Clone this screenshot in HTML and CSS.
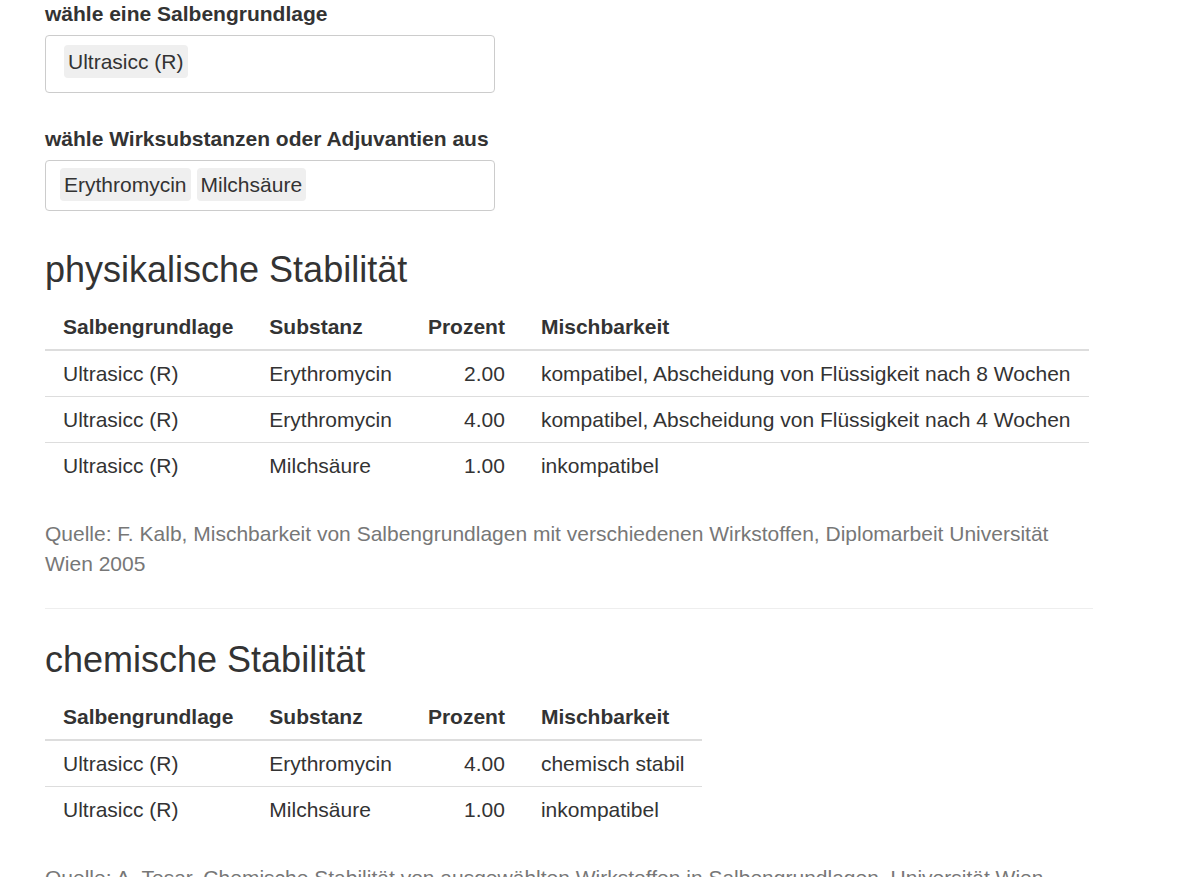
FILE: index.html
```html
<!DOCTYPE html>
<html lang="de">
<head>
<meta charset="utf-8">
<title>Salbengrundlagen</title>
<link rel="stylesheet" href="styles.css">
</head>
<body>
<div class="container">
  <div class="field">
    <label class="field-label">wähle eine Salbengrundlage</label>
    <div class="select select-single">
      <span class="tag">Ultrasicc (R)</span>
    </div>
  </div>
  <div class="field">
    <label class="field-label">wähle Wirksubstanzen oder Adjuvantien aus</label>
    <div class="select select-multi">
      <span class="tag">Erythromycin</span>
      <span class="tag">Milchsäure</span>
    </div>
  </div>

  <h2 class="section-title">physikalische Stabilität</h2>
  <table class="data-table">
    <thead>
      <tr><th>Salbengrundlage</th><th>Substanz</th><th class="num">Prozent</th><th>Mischbarkeit</th></tr>
    </thead>
    <tbody>
      <tr><td>Ultrasicc (R)</td><td>Erythromycin</td><td class="num">2.00</td><td>kompatibel, Abscheidung von Flüssigkeit nach 8 Wochen</td></tr>
      <tr><td>Ultrasicc (R)</td><td>Erythromycin</td><td class="num">4.00</td><td>kompatibel, Abscheidung von Flüssigkeit nach 4 Wochen</td></tr>
      <tr><td>Ultrasicc (R)</td><td>Milchsäure</td><td class="num">1.00</td><td>inkompatibel</td></tr>
    </tbody>
  </table>
  <p class="source">Quelle: F. Kalb, Mischbarkeit von Salbengrundlagen mit verschiedenen Wirkstoffen, Diplomarbeit Universität Wien 2005</p>
  <hr class="divider">

  <h2 class="section-title">chemische Stabilität</h2>
  <table class="data-table">
    <thead>
      <tr><th>Salbengrundlage</th><th>Substanz</th><th class="num">Prozent</th><th>Mischbarkeit</th></tr>
    </thead>
    <tbody>
      <tr><td>Ultrasicc (R)</td><td>Erythromycin</td><td class="num">4.00</td><td>chemisch stabil</td></tr>
      <tr><td>Ultrasicc (R)</td><td>Milchsäure</td><td class="num">1.00</td><td>inkompatibel</td></tr>
    </tbody>
  </table>
  <p class="source">Quelle: A. Tesar, Chemische Stabilität von ausgewählten Wirkstoffen in Salbengrundlagen, Universität Wien 2007</p>
</div>
</body>
</html>
```

FILE: styles.css
```css
html, body {
  margin: 0;
  padding: 0;
  background: #fff;
}
body {
  font-family: "Liberation Sans", Arial, Helvetica, sans-serif;
  font-size: 21px;
  line-height: 29px;
  color: #333;
}
.container {
  width: 1048px;
  padding: 0 0 0 45px;
  margin-top: -1px;
}
.field {
  display: flex;
  flex-direction: column;
  align-items: flex-start;
}
.field-label {
  font-weight: bold;
  line-height: 29px;
  margin-bottom: 7px;
}
.select {
  box-sizing: border-box;
  width: 450px;
  border: 1px solid #ccc;
  border-radius: 4px;
  display: flex;
  gap: 6px;
  align-items: flex-start;
}
.select-single {
  height: 58px;
  padding: 9px 18px 0;
  margin-bottom: 31px;
}
.select-multi {
  height: 51px;
  padding: 7px 14px 0;
  margin-bottom: 39px;
}
.tag {
  background: #efefef;
  border-radius: 4px;
  padding: 2px 4px;
  line-height: 29px;
}
.section-title {
  font-size: 36px;
  font-weight: normal;
  line-height: 40px;
  margin: 0 0 14px;
  color: #333;
}
.data-table {
  border-collapse: collapse;
  border-spacing: 0;
}
.data-table th,
.data-table td {
  padding: 8px 18px;
  line-height: 29px;
  text-align: left;
  white-space: nowrap;
  vertical-align: top;
}
.data-table th {
  font-weight: bold;
  border-bottom: 2px solid #ddd;
}
.data-table tbody tr + tr td {
  border-top: 1px solid #ddd;
}
.data-table .num {
  text-align: right;
}
.source {
  color: #777;
  font-size: 21px;
  line-height: 30px;
  margin: 31px 0 0;
}
.divider {
  border: 0;
  border-top: 1px solid #eee;
  margin: 29px 0 31px;
}
```
